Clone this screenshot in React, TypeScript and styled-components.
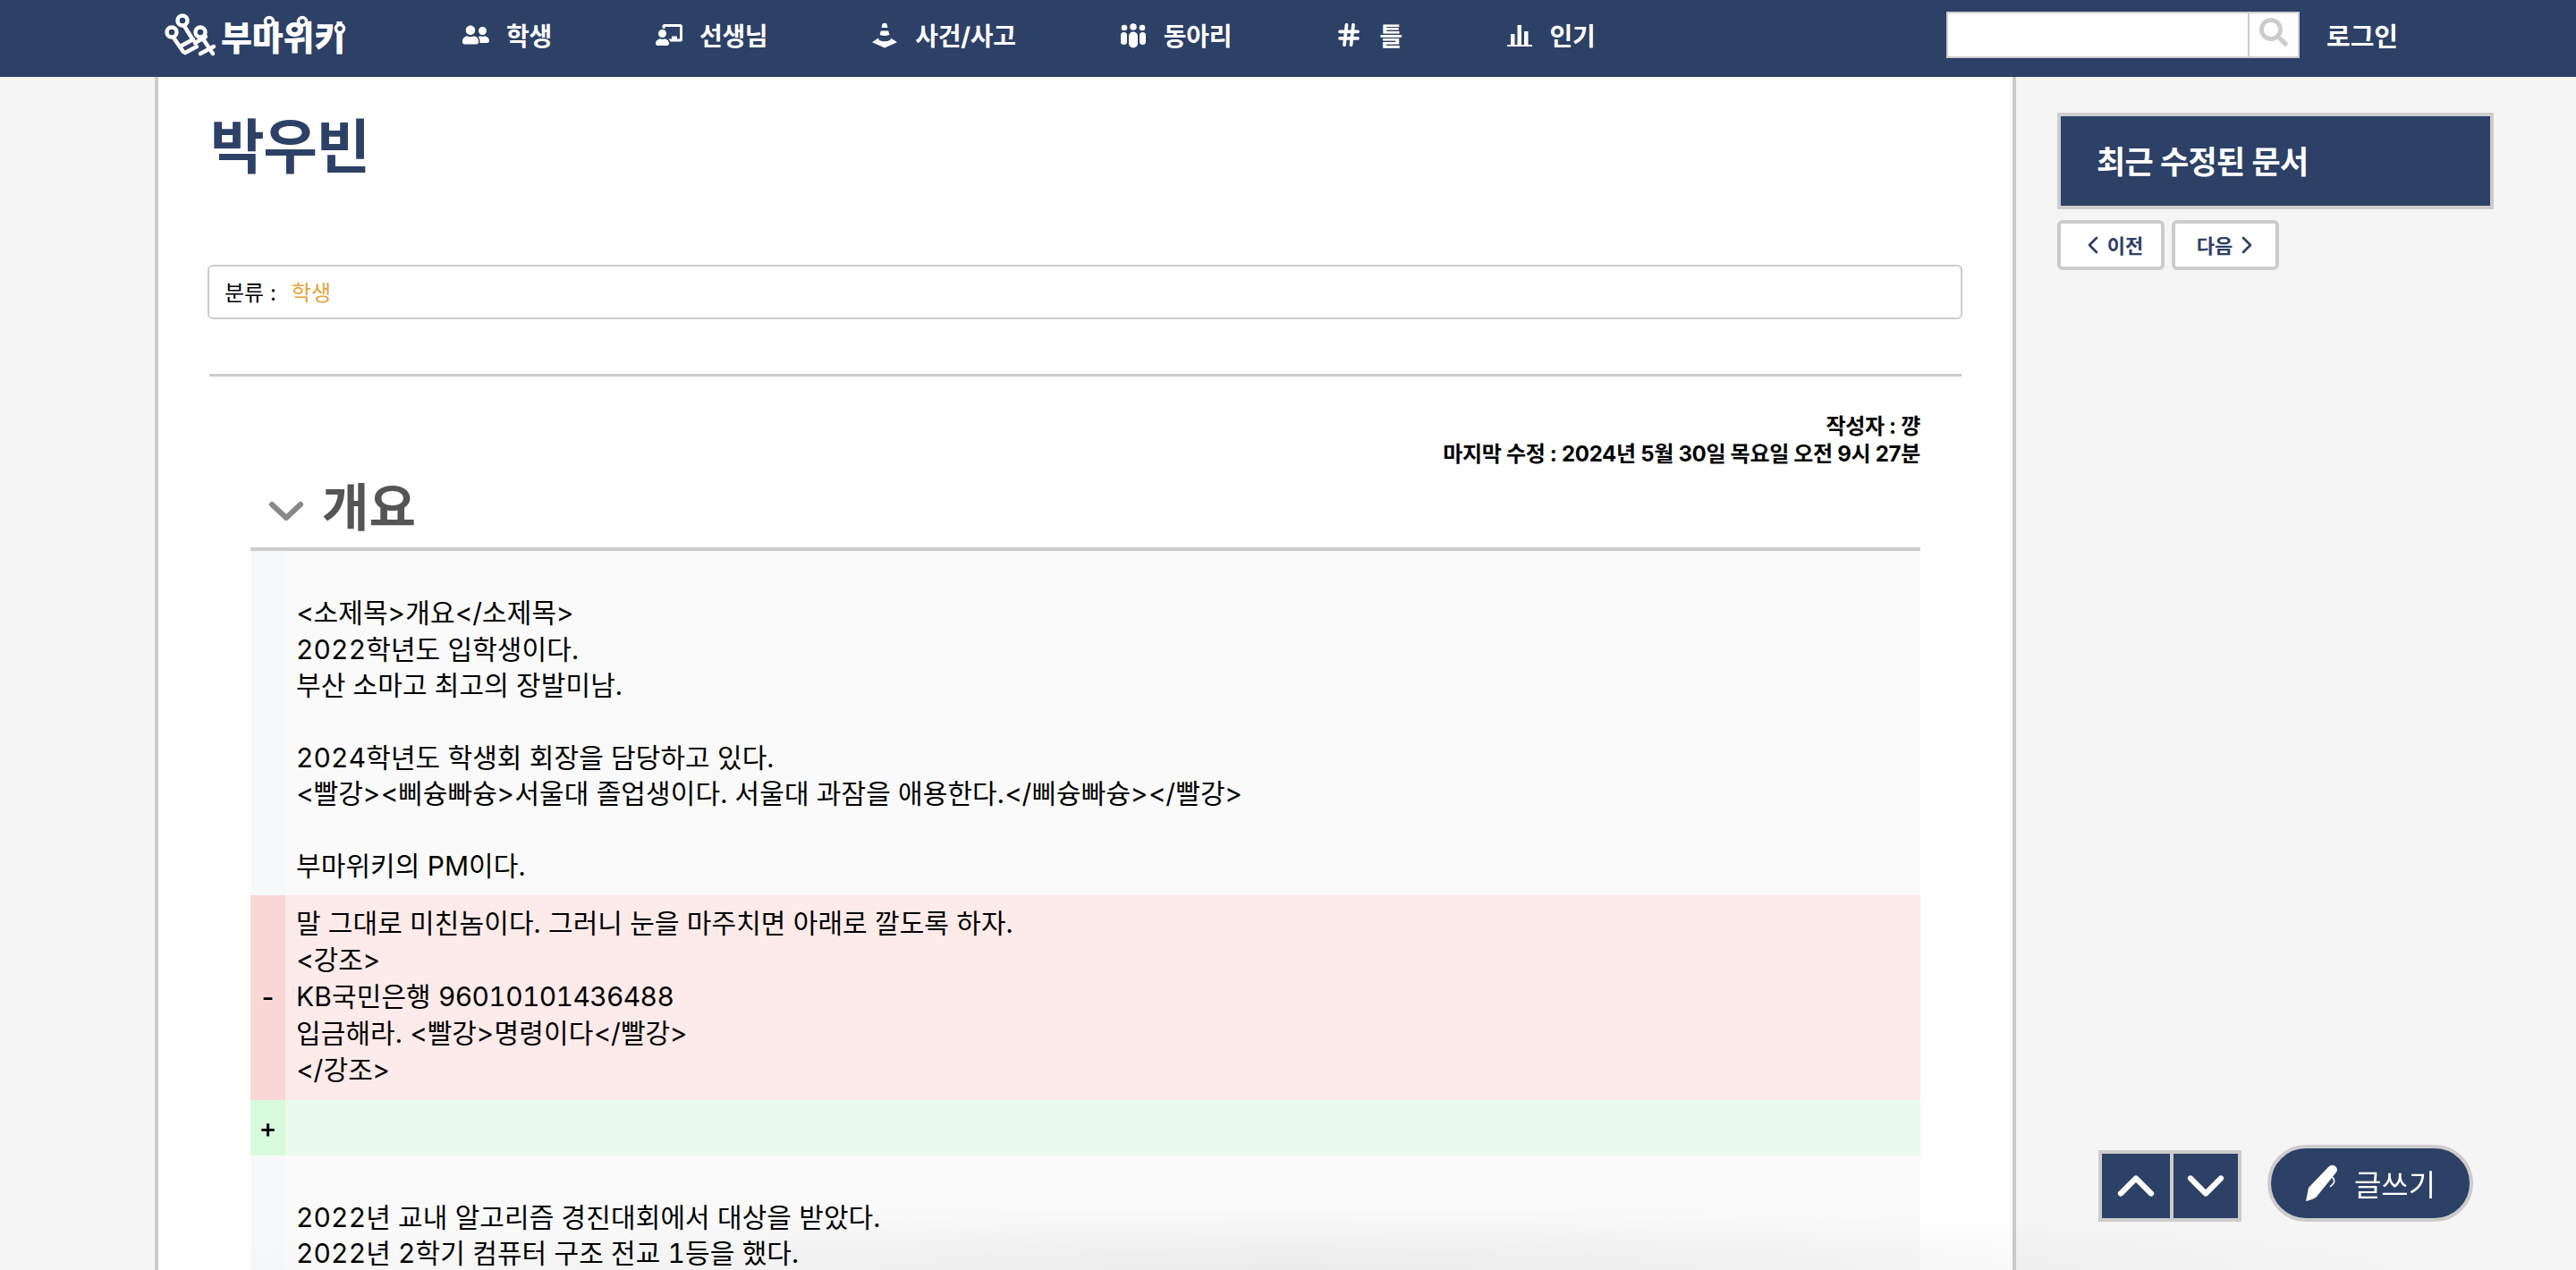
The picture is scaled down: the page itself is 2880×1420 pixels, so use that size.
import React from "react";
import styled, { createGlobalStyle } from "styled-components";
import { FaUserFriends, FaChalkboardTeacher, FaSearch } from "react-icons/fa";
import { Hash, ChevronUp, ChevronDown, ChevronLeft, ChevronRight } from "lucide-react";

const navy = "#2d4066";
const line = "#cccccc";
const font = `Inter, "Noto Sans CJK KR", "Noto Sans", sans-serif`;

const Global = createGlobalStyle`
  html, body { margin: 0; padding: 0; height: 100%; overflow: hidden; background: #f5f5f5; }
  body { font-family: ${font}; color: #000; }
  * { box-sizing: border-box; }
`;

const Page = styled.div`height: 1420px; overflow: hidden; display: flex; flex-direction: column;`;
const Header = styled.header`
  height: 86px; flex: none; background: ${navy}; display: flex; align-items: center; padding-left: 179px; color: #fff;
`;
const Logo = styled.div`
  width: 208px; height: 48px; position: relative; display: flex; align-items: center; margin-top: -8px; gap: 0;
`;
const LogoText = styled.span`
  font-size: 38px; font-weight: 900; letter-spacing: -.2px; line-height: 48px; white-space: nowrap; margin-top: 6px; margin-left: -2px;
`;
const LogoRings = styled.svg`
  position: absolute; left: 0; top: 0; width: 208px; height: 48px; pointer-events: none;
`;
const Nav = styled.nav`display: flex; align-items: center; gap: 116px; margin-left: 130px; margin-top: -8px;`;
const NavItem = styled.a`
  display: flex; align-items: center; gap: 19px; font-size: 28px; font-weight: 700; letter-spacing: -.3px; white-space: nowrap; color: #fff;
  svg { flex: none; width: 30px; height: 30px; }
`;
const Tools = styled.div`display: flex; align-items: center; margin-left: auto; margin-top: -8px; margin-right: 199px;`;
const Search = styled.div`
  width: 395px; height: 52px; background: #fff; border: 2px solid ${line}; display: flex; justify-content: flex-end;
`;
const SearchBtn = styled.div`
  width: 56px; border-left: 2px solid ${line}; color: ${line}; display: flex; align-items: center; justify-content: center;
  padding-bottom: 6px;
  svg { width: 32px; height: 32px; }
`;
const Login = styled.a`font-size: 29px; font-weight: 700; color: #fff; margin-left: 30px; white-space: nowrap;`;

const Body = styled.div`display: flex; flex: 1; padding-left: 173px; min-height: 0;`;
const Main = styled.main`
  width: 2081px; background: #fff; border-left: 4px solid ${line}; border-right: 4px solid ${line}; padding: 0 56px 0 55px; overflow: hidden;
`;
const Title = styled.h1`
  margin: 28px 0 0; padding-left: 3px; font-size: 66px; line-height: 100px; height: 182px; font-weight: 700; color: ${navy}; letter-spacing: -1.5px;
`;
const Category = styled.div`
  height: 61px; border: 2px solid ${line}; border-radius: 6px; display: flex; align-items: center; padding: 0 0 2px 17px; font-size: 24px; gap: 17px; font-weight: 400;
`;
const CategoryLink = styled.span`color: #e5a43a; font-weight: 400;`;
const Rule = styled.hr`margin: 61px 1px 0 2px; border: 0; height: 3px; background: ${line};`;
const Article = styled.section`margin: 0 47px 0 48px;`;
const Meta = styled.div`
  margin-top: 40px; text-align: right; font-size: 24px; line-height: 31px; font-weight: 700; letter-spacing: -.3px;
`;
const SectionHead = styled.div`
  height: 89px; border-bottom: 4px solid ${line}; box-sizing: content-box; display: flex; align-items: center; padding-left: 21px; gap: 21px;
  color: #555;
`;
const SectionChevron = styled.svg`width: 38px; height: 24px; flex: none; margin-top: 8px;`;
const SectionTitle = styled.h2`margin: 0; font-size: 57px; line-height: 74px; font-weight: 700; color: #555;`;

const tones = {
  same: ["#f7f8fa", "#fafafa"],
  del: ["#f9d7d5", "#fcebe9"],
  add: ["#d7fbdc", "#e9fceb"],
} as const;
const DiffRow = styled.div<{ $tone: keyof typeof tones }>`
  display: flex; background: ${(p) => tones[p.$tone][1]};
`;
const Gutter = styled.div<{ $tone: keyof typeof tones }>`
  width: 39px; flex: none; background: ${(p) => tones[p.$tone][0]}; display: flex; align-items: center; justify-content: center; font-size: 30px; font-weight: 500;
`;
const Code = styled.div<{ $pad: string; $lh: number }>`
  padding: ${(p) => p.$pad}; flex: 1; font-size: 30px; line-height: ${(p) => p.$lh}px; min-height: 62px; letter-spacing: .1px;
  font-variant-numeric: tabular-nums;
`;
const CodeLine = styled.div<{ $lh: number }>`min-height: ${(p) => p.$lh}px; white-space: pre;`;
const Account = styled.span`letter-spacing: -.65px;`;

const FloatBar = styled.div`
  position: fixed; right: 115px; bottom: 54px; display: flex; align-items: flex-end; gap: 29px;
`;
const Arrows = styled.div`display: flex; background: ${line}; border: 4px solid ${line}; gap: 4px;`;
const ArrowBtn = styled.button<{ $w: number }>`
  width: ${(p) => p.$w}px; height: 72px; border: 0; padding: 0; background: ${navy}; color: #fff; display: flex; align-items: center; justify-content: center;
  svg { width: 68px; height: 68px; stroke-width: 2.2; flex: none; }
`;
const Write = styled.button`
  width: 230px; height: 86px; border-radius: 43px; border: 4px solid ${line}; background: ${navy}; color: #fff; display: flex; align-items: center; justify-content: center; gap: 17px;
  font-family: ${font}; font-size: 33px; font-weight: 400; padding: 0;
`;
const Shade = styled.div`
  position: fixed; left: 0; right: 0; bottom: 0; height: 70px; pointer-events: none;
  background: radial-gradient(ellipse 44% 100% at 50% 100%, rgba(0,0,0,.06), rgba(0,0,0,0));
`;

const Aside = styled.aside`width: 488px; margin-left: 46px; padding-top: 40px;`;
const AsideTitle = styled.div`
  height: 108px; background: ${navy}; border: 4px solid ${line}; color: #fff; font-size: 35px; font-weight: 700; display: flex; align-items: center; padding: 0 0 3px 40px; letter-spacing: -.6px;
`;
const Pager = styled.div`display: flex; gap: 8px; margin-top: 12px;`;
const PagerBtn = styled.button<{ $shift: number }>`
  width: 120px; height: 56px; background: #fff; border: 4px solid ${line}; border-radius: 6px; color: ${navy}; font-family: ${font}; font-size: 22px; font-weight: 700; display: flex; align-items: center; justify-content: center; gap: 0; padding: 0 0 2px ${(p) => p.$shift}px;
  svg { width: 32px; height: 32px; stroke-width: 2; flex: none; margin-top: 2px; }
`;

const LogoMark = () => (
  <svg width="70" height="52" viewBox="0 0 68 52" fill="none" stroke="#fff" strokeWidth="4.5" strokeLinecap="round">
    <circle cx="24" cy="10" r="5.5" />
    <circle cx="12" cy="23" r="5.5" />
    <circle cx="44" cy="23" r="5.5" />
    <path d="M26 16 L36 32 M14 29 L25 45 M46 29 L58 47 M23 38 L36 31 M27 46 L40 39 M38 35 L50 28 M44 47 L59 39" />
  </svg>
);
const ConeIcon = () => (
  <svg viewBox="0 0 30 30" fill="#fff">
    <path d="M12.6 2.5 Q15 .8 17.4 2.5 L18.5 7 H11.5 Z" />
    <path d="M10.8 10.5 H19.2 L20.4 15 Q15 17.2 9.6 15 Z" />
    <path d="M8 18.5 Q8 22.3 15 22.3 Q22 22.3 22 18.5 L29 23.2 L15 29.5 L1 23.2 Z" />
  </svg>
);
const ClubIcon = () => (
  <svg viewBox="0 0 30 30" fill="#fff">
    <circle cx="5" cy="7" r="3.3" /><circle cx="15" cy="6" r="3.8" /><circle cx="25" cy="7" r="3.3" />
    <rect x="1" y="12" width="7" height="14" rx="3.5" /><rect x="10" y="11.5" width="10" height="18" rx="5" /><rect x="22" y="12" width="7" height="14" rx="3.5" />
  </svg>
);
const StatsIcon = () => (
  <svg viewBox="0 0 30 30" fill="#fff">
    <rect x="1" y="26" width="28" height="2" /><rect x="5" y="14" width="4.5" height="12" /><rect x="12.5" y="4" width="4.5" height="22" /><rect x="20" y="11" width="4.5" height="15" />
  </svg>
);
const PenIcon = () => (
  <svg width="38" height="42" viewBox="0 0 38 42" fill="#fff">
    <path d="M1 41 L4 26 L26 3 Q30 -1 34 2 Q38 6 34 10 L13 36 Q10 39 1 41 Z" />
    <path d="M30 14 Q34 17 32 21 L28 25" fill="none" stroke="#fff" strokeWidth="1.6" />
  </svg>
);

const navItems = [
  { icon: <FaUserFriends />, label: "학생" },
  { icon: <FaChalkboardTeacher />, label: "선생님" },
  { icon: <ConeIcon />, label: "사건/사고" },
  { icon: <ClubIcon />, label: "동아리" },
  { icon: <Hash strokeWidth={3} />, label: "틀" },
  { icon: <StatsIcon />, label: "인기" },
];

const diff: { tone: keyof typeof tones; mark: string; pad: string; lh: number; lines: React.ReactNode[] }[] = [
  {
    tone: "same", mark: "", pad: "9px 14px 12px 12px", lh: 40.4,
    lines: ["", "<소제목>개요</소제목>", "2022학년도 입학생이다.", "부산 소마고 최고의 장발미남.", "", "2024학년도 학생회 회장을 담당하고 있다.", "<빨강><삐슝빠슝>서울대 졸업생이다. 서울대 과잠을 애용한다.</삐슝빠슝></빨강>", "", "부마위키의 PM이다."],
  },
  {
    tone: "del", mark: "-", pad: "11px 14px 13px 12px", lh: 41,
    lines: ["말 그대로 미친놈이다. 그러니 눈을 마주치면 아래로 깔도록 하자.", "<강조>", <>KB국민은행 <Account>96010101436488</Account></>, "입금해라. <빨강>명령이다</빨강>", "</강조>"],
  },
  { tone: "add", mark: "+", pad: "11px 14px 11px 12px", lh: 40.4, lines: [] },
  {
    tone: "same", mark: "", pad: "9px 14px 14px 12px", lh: 40.4,
    lines: ["", "2022년 교내 알고리즘 경진대회에서 대상을 받았다.", "2022년 2학기 컴퓨터 구조 전교 1등을 했다."],
  },
];

export default function App() {
  return (
    <Page>
      <Global />
      <Header>
        <Logo>
          <LogoMark />
          <LogoText>부마위키</LogoText>
          <LogoRings viewBox="0 0 208 48" fill="#2d4066" stroke="#fff" strokeWidth="3.5">
            <circle cx="122" cy="9" r="4.5" />
            <circle cx="159" cy="9" r="4.5" />
            <circle cx="201" cy="17" r="4.5" />
          </LogoRings>
        </Logo>
        <Nav>
          {navItems.map((n) => (
            <NavItem key={n.label}>{n.icon}{n.label}</NavItem>
          ))}
        </Nav>
        <Tools>
          <Search><SearchBtn><FaSearch /></SearchBtn></Search>
          <Login>로그인</Login>
        </Tools>
      </Header>
      <Body>
        <Main>
          <Title>박우빈</Title>
          <Category>분류 : <CategoryLink>학생</CategoryLink></Category>
          <Rule />
          <Article>
            <Meta>
              <div>작성자 : 꺙</div>
              <div>마지막 수정 : 2024년 5월 30일 목요일 오전 9시 27분</div>
            </Meta>
            <SectionHead>
              <SectionChevron viewBox="0 0 38 24" fill="none" stroke="#888" strokeWidth="6" strokeLinecap="round" strokeLinejoin="round">
                <path d="M3 4 L19 19 L35 4" />
              </SectionChevron>
              <SectionTitle>개요</SectionTitle>
            </SectionHead>
            {diff.map((row, i) => (
              <DiffRow key={i} $tone={row.tone}>
                <Gutter $tone={row.tone}>{row.mark}</Gutter>
                <Code $pad={row.pad} $lh={row.lh}>
                  {row.lines.map((l, j) => <CodeLine key={j} $lh={row.lh}>{l}</CodeLine>)}
                </Code>
              </DiffRow>
            ))}
          </Article>
        </Main>
        <Aside>
          <AsideTitle>최근 수정된 문서</AsideTitle>
          <Pager>
            <PagerBtn $shift={0}><ChevronLeft />이전</PagerBtn>
            <PagerBtn $shift={8}>다음<ChevronRight /></PagerBtn>
          </Pager>
        </Aside>
      </Body>
      <Shade />
      <FloatBar>
        <Arrows>
          <ArrowBtn $w={76}><ChevronUp /></ArrowBtn>
          <ArrowBtn $w={72}><ChevronDown /></ArrowBtn>
        </Arrows>
        <Write><PenIcon />글쓰기</Write>
      </FloatBar>
    </Page>
  );
}
